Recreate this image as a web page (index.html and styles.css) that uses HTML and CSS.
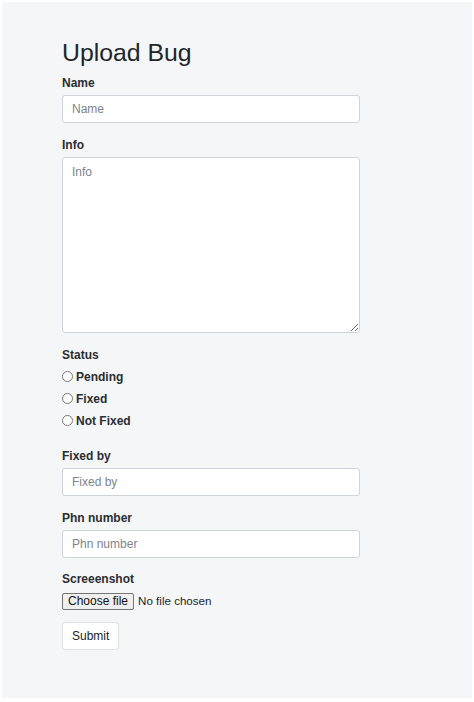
FILE: index.html
```html
<!DOCTYPE html>
<html lang="en">
<head>
<meta charset="utf-8">
<title>Upload Bug</title>
<link rel="stylesheet" href="styles.css">
</head>
<body>
<div class="page">
  <form class="bug-form">
    <h2 class="title">Upload Bug</h2>
    <div class="group">
      <label class="label" for="name">Name</label>
      <input class="control" id="name" type="text" placeholder="Name">
    </div>
    <div class="group">
      <label class="label" for="info">Info</label>
      <textarea class="control area" id="info" placeholder="Info"></textarea>
    </div>
    <div class="group radios">
      <div class="label">Status</div>
      <label class="radio"><input type="radio" name="status"> Pending</label>
      <label class="radio"><input type="radio" name="status"> Fixed</label>
      <label class="radio"><input type="radio" name="status"> Not Fixed</label>
    </div>
    <div class="group">
      <label class="label" for="fixed">Fixed by</label>
      <input class="control" id="fixed" type="text" placeholder="Fixed by">
    </div>
    <div class="group">
      <label class="label" for="phn">Phn number</label>
      <input class="control" id="phn" type="text" placeholder="Phn number">
    </div>
    <div class="group">
      <div class="label shot-label">Screeenshot</div>
      <label class="file-row" for="shot">
        <span class="file-btn">Choose file</span>
        <span class="file-name">No file chosen</span>
        <input class="file-input" id="shot" type="file">
      </label>
    </div>
    <button class="btn" type="button">Submit</button>
  </form>
</div>
</body>
</html>
```
FILE: styles.css
```css
html, body {
  margin: 0;
  padding: 0;
  background: #ffffff;
}
body {
  font-family: "Liberation Sans", Arial, sans-serif;
  font-size: 12px;
  line-height: 18px;
  color: #212529;
}
.page {
  margin: 2px;
  height: 696px;
  box-sizing: border-box;
  background: #f5f6f8;
  padding: 36px 0 0 60px;
}
.bug-form {
  width: 298px;
}
.title {
  margin: 0 0 6px;
  font-size: 24.8px;
  line-height: 29px;
  font-weight: 500;
  color: #212529;
}
.group {
  margin-bottom: 12px;
}
.label {
  display: block;
  font-weight: bold;
  padding-top: 1px;
  margin-bottom: 3px;
  color: #2a2d31;
}
.control {
  display: block;
  width: 100%;
  box-sizing: border-box;
  height: 28px;
  padding: 4px 9px;
  font-family: inherit;
  font-size: 12px;
  line-height: 18px;
  color: #495057;
  background: #ffffff;
  border: 1px solid #ced4da;
  border-radius: 3px;
  margin: 0;
}
.control::placeholder {
  color: #7d848b;
}
.area {
  height: 176px;
  padding-top: 5px;
  resize: vertical;
}
.radios {
  margin-bottom: 16px;
}
.radio {
  display: flex;
  align-items: center;
  font-weight: bold;
  padding-top: 1px;
  margin-bottom: 3px;
  height: 18px;
  color: #2a2d31;
}
.radio input {
  width: 11px;
  height: 11px;
  margin: -2px 3px 0 0;
}
.shot-label {
  padding-top: 0;
  margin-bottom: 4px;
}
.file-row {
  display: flex;
  align-items: center;
  height: 18px;
  margin-top: 1px;
}
.file-btn {
  display: inline-flex;
  align-items: center;
  box-sizing: border-box;
  height: 17px;
  padding: 0 5px;
  font-size: 12px;
  color: #111;
  background: #efefef;
  border: 1px solid #767676;
  border-radius: 2px;
}
.file-name {
  margin-left: 4px;
  font-size: 11.6px;
  color: #212529;
}
.file-input {
  display: none;
}
.btn {
  display: block;
  font-family: inherit;
  font-size: 12px;
  line-height: 18px;
  padding: 4px 9px;
  color: #212529;
  background: #ffffff;
  border: 1px solid #dee2e6;
  border-radius: 3px;
  margin: 0;
  height: 28px;
}
```
